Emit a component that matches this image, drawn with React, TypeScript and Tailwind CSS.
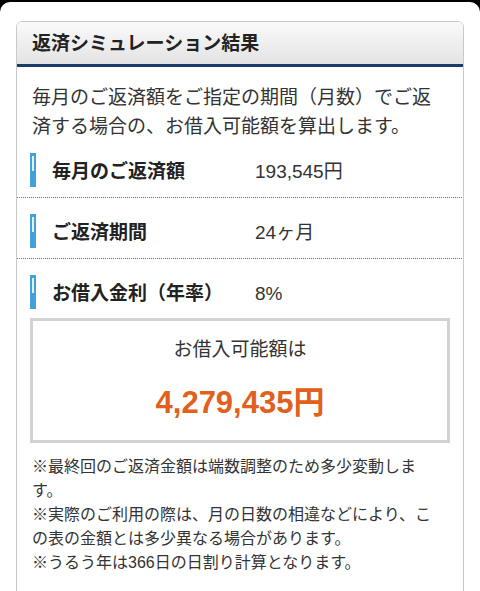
import React from 'react';

// Rows of the repayment result
interface ResultRow {
  label: string;
  value: string;
}

const rows: ResultRow[] = [
  { label: '毎月のご返済額', value: '193,545円' },
  { label: 'ご返済期間', value: '24ヶ月' },
  { label: 'お借入金利（年率）', value: '8%' },
];

const notes = [
  '※最終回のご返済金額は端数調整のため多少変動します。',
  '※実際のご利用の際は、月の日数の相違などにより、この表の金額とは多少異なる場合があります。',
  '※うるう年は366日の日割り計算となります。',
];

const Marker: React.FC = () => (
  <div className="w-[6px] h-[34px] bg-[#44a0d8] shrink-0 pt-[3px] pl-[2px]">
    <div className="w-[2px] h-[15px] bg-white/85" />
  </div>
);

const DottedLine: React.FC = () => (
  <div className="h-px bg-[linear-gradient(to_right,#2f8dc4_50%,transparent_50%)] bg-[length:2px_1px] bg-repeat-x" />
);

const App: React.FC = () => {
  return (
    <div
      className="bg-black min-h-screen pt-[2px]"
      style={{ fontFamily: '"Liberation Sans", "Noto Sans CJK JP", sans-serif' }}
    >
      <div className="bg-white rounded-t-[10px] min-h-[589px] pt-[19px] px-[16px] overflow-hidden">
        <div className="border border-[#c9c9c9] rounded-t-[6px] overflow-hidden">
          {/* Header */}
          <div className="h-[45px] bg-gradient-to-b from-[#fafafa] to-[#e3e3e3] border-b-[3px] border-[#1b3c6b] flex items-center pl-[15px]">
            <h2 className="mt-[3px] text-[19px] font-bold text-[#222]">返済シミュレーション結果</h2>
          </div>

          <div className="bg-white">
            <p className="pl-[15px] pr-[27px] pt-[16px] text-[19px] leading-[29px] text-[#333]">
              毎月のご返済額をご指定の期間（月数）でご返済する場合の、お借入可能額を算出します。
            </p>

            {rows.map((row, i) => (
              <React.Fragment key={row.label}>
                <div
                  className={
                    i === 0
                      ? 'flex items-center pl-[13px] pt-[12px] pb-[10px]'
                      : i === rows.length - 1
                        ? 'flex items-center pl-[13px] pt-[16px]'
                        : 'flex items-center pl-[13px] pt-[16px] pb-[10px]'
                  }
                >
                  <Marker />
                  <span className="mt-[4px] ml-[16px] w-[203px] text-[19px] font-bold text-[#222]">{row.label}</span>
                  <span className="mt-[4px] text-[19px] text-[#333]">{row.value}</span>
                </div>
                {i < rows.length - 1 && <DottedLine />}
              </React.Fragment>
            ))}

            {/* Result box */}
            <div className="mx-[13px] mt-[9px] border-[3px] border-[#d2d2d2] flex flex-col items-center pt-[15px] pb-[17px]">
              <span className="text-[19px] leading-[28px] text-[#333]">お借入可能額は</span>
              <span className="mt-[19px] text-[31px] leading-[40px] font-bold text-[#e0601c]">4,279,435円</span>
            </div>

            <div className="pl-[15px] pr-[27px] pt-[12px] pb-[40px]">
              {notes.map((note) => (
                <p key={note} className="text-[16px] leading-[24px] text-[#333]">
                  {note}
                </p>
              ))}
            </div>
          </div>
        </div>
      </div>
    </div>
  );
};

export default App;
